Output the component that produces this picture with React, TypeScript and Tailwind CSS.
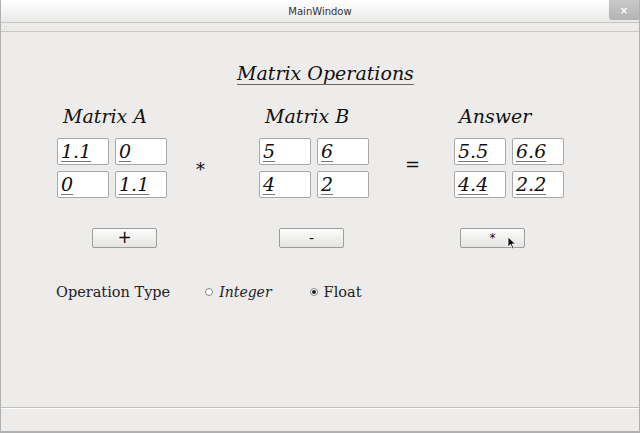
import React from "react";

const serif = { fontFamily: '"DejaVu Serif", serif' };

function Cell({ v }: { v: string }) {
  return (
    <div className="w-[52px] h-[27px] bg-white border border-[#a8a8a8] rounded-[2px] flex items-center pl-[3px]">
      <span
        className="italic text-[19px] leading-none text-[#111] underline decoration-[#777] underline-offset-[3px]"
        style={serif}
      >
        {v}
      </span>
    </div>
  );
}

function Grid({ vals }: { vals: string[] }) {
  return (
    <div className="grid grid-cols-[52px_52px] gap-x-[6px] gap-y-[6px]">
      {vals.map((v, i) => (
        <Cell key={i} v={v} />
      ))}
    </div>
  );
}

function Btn({ label, cls = "" }: { label: string; cls?: string }) {
  return (
    <div
      className={`w-[65px] h-[20px] border border-[#9c9c9c] rounded-[2px] bg-gradient-to-b from-[#fdfdfd] to-[#e4e4e2] flex items-center justify-center text-[#111] ${cls}`}
      style={{ fontFamily: '"DejaVu Sans", sans-serif' }}
    >
      {label}
    </div>
  );
}

export default function App() {
  return (
    <div className="w-[640px] h-[433px] bg-[#edecea] flex flex-col border-x border-[#b0b0b0] overflow-hidden relative">
      {/* title bar */}
      <div className="h-[23px] bg-gradient-to-b from-[#ffffff] to-[#e9e9e8] border-b border-[#c4c4c4] flex items-center justify-center relative">
        <span className="text-[10px] text-[#333]" style={{ fontFamily: '"DejaVu Sans", sans-serif' }}>
          MainWindow
        </span>
        <div className="absolute right-0 top-0 w-[30px] h-[20px] bg-gradient-to-b from-[#c9c9c9] to-[#b3b3b3] rounded-bl-[3px] flex items-center justify-center">
          <span className="text-white text-[10px] font-bold" style={{ fontFamily: '"DejaVu Sans", sans-serif' }}>
            ×
          </span>
        </div>
      </div>
      {/* toolbar strip */}
      <div className="h-[9px] border-b border-[#c8c8c6] flex items-center pl-[3px]">
        <div className="grid grid-cols-2 gap-[1px]">
          <div className="w-[1px] h-[1px] bg-[#d6d6d4]" />
          <div className="w-[1px] h-[1px] bg-[#d6d6d4]" />
          <div className="w-[1px] h-[1px] bg-[#d6d6d4]" />
          <div className="w-[1px] h-[1px] bg-[#d6d6d4]" />
        </div>
      </div>
      {/* central */}
      <div className="flex-1 flex flex-col" style={serif}>
        <div className="pt-[31px] pl-[236px]">
          <span className="italic text-[19px] leading-none underline decoration-[#666] underline-offset-[4px] text-[#111]">
            Matrix Operations
          </span>
        </div>
        {/* labels */}
        <div className="flex mt-[20px] text-[19px] italic text-[#111] leading-none">
          <span className="ml-[62px] w-[202px]">Matrix A</span>
          <span className="w-[194px]">Matrix B</span>
          <span>Answer</span>
        </div>
        {/* grids */}
        <div className="flex items-center mt-[12px]">
          <div className="ml-[56px]">
            <Grid vals={["1.1", "0", "0", "1.1"]} />
          </div>
          <div className="w-[92px] pl-[29px] text-[18px] text-[#111] pt-[2px]">*</div>
          <Grid vals={["5", "6", "4", "2"]} />
          <div className="w-[85px] pl-[36px] text-[18px] text-[#111] pb-[8px]">=</div>
          <Grid vals={["5.5", "6.6", "4.4", "2.2"]} />
        </div>
        {/* buttons */}
        <div className="flex mt-[30px] text-[17px]">
          <Btn label="+" cls="ml-[91px]" />
          <Btn label="-" cls="ml-[122px] text-[14px]" />
          <div className="relative ml-[116px]">
            <Btn label="*" cls="text-[12px]" />
            <svg className="absolute left-[47px] top-[8px]" width="10" height="14" viewBox="0 0 10 14">
              <path d="M1 1 L1 11 L3.5 8.5 L5.5 13 L7 12.3 L5 8 L8.5 8 Z" fill="#111" stroke="#fff" strokeWidth="0.8" />
            </svg>
          </div>
        </div>
        {/* radio row */}
        <div className="flex items-center mt-[37px] text-[#222] leading-none">
          <span className="ml-[55px] text-[14.5px]">Operation Type</span>
          <div className="ml-[35px] flex items-center">
            <div className="w-[8px] h-[8px] rounded-full border border-[#888] bg-white" />
            <span className="ml-[6px] italic text-[14px]">Integer</span>
          </div>
          <div className="ml-[38px] flex items-center">
            <div className="w-[8px] h-[8px] rounded-full border border-[#888] bg-white flex items-center justify-center">
              <div className="w-[4px] h-[4px] rounded-full bg-[#222]" />
            </div>
            <span className="ml-[6px] text-[14.5px]">Float</span>
          </div>
        </div>
      </div>
      {/* status bar */}
      <div className="h-[26px] border-t border-[#c0c0be] relative">
        <div className="border-t border-white h-full" />
      </div>
      <div className="absolute bottom-0 left-0 right-0 h-[2px] bg-[#b0b0b0]" />
    </div>
  );
}
